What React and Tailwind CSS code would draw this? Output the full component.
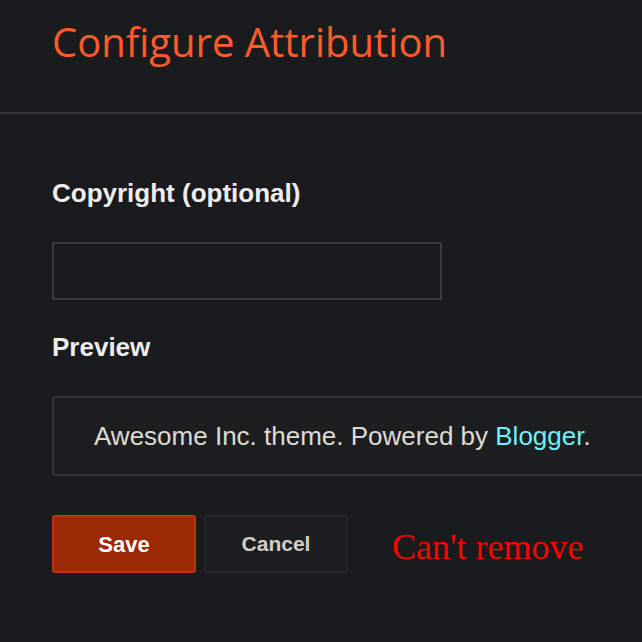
export default function App() {
    return (
        <div className="w-[642px] h-[642px] overflow-hidden bg-[#1a1b1d]" style={{fontFamily: '"Liberation Sans", Arial, sans-serif'}}>
            <div className="h-[114px] pl-[52px] pt-[14px] border-b-2 border-[#333436]">
                <h1 className="text-[40px] leading-[56px] text-[#ff5b2c]" style={{fontFamily: '"Open Sans", sans-serif'}}>
                    Configure Attribution
                </h1>
            </div>

            <div className="pl-[52px] pt-[64px]">
                <label className="block text-[26px] leading-[30px] font-bold text-[#eeeeee]">Copyright (optional)</label>
                <input
                    type="text"
                    className="mt-[34px] block w-[390px] h-[58px] bg-[#1a1b1d] border-2 border-[#3a3b3d] outline-none text-[#ddd] px-2"
                />

                <h2 className="mt-[32px] text-[26px] leading-[30px] font-bold text-[#eeeeee]">Preview</h2>

                <div className="mt-[34px] w-[620px] h-[80px] border-2 border-[#333436] bg-[#1d1e20] pl-[40px] flex items-center">
                    <p className="text-[26px] text-[#dedbd6]">
                        Awesome Inc. theme. Powered by <a href="#" className="text-[#6ff0fb]">Blogger</a>.
                    </p>
                </div>

                <div className="mt-[38px] flex items-center">
                    <button className="w-[144px] h-[58px] rounded-[3px] bg-[#9c2905] border-2 border-[#c03410] text-white font-bold text-[22px]">
                        Save
                    </button>
                    <button className="ml-[8px] w-[144px] h-[58px] rounded-[3px] bg-[#1d1e20] border-2 border-[#262729] text-[#d2cfca] font-bold text-[21px]">
                        Cancel
                    </button>
                    <span className="ml-[44px] mt-[6px] text-[36px] text-[#ff0000]" style={{fontFamily: '"Liberation Serif", serif'}}>
                        Can't remove
                    </span>
                </div>
            </div>
        </div>
    )
}
